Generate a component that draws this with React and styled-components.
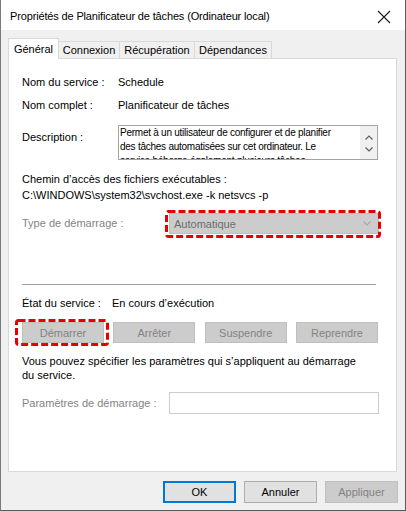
import React from 'react';
import styled, { createGlobalStyle } from 'styled-components';

const GlobalStyle = createGlobalStyle`
    html, body {
        margin: 0;
        padding: 0;
        background: #ffffff;
    }
`;

const colors = {
    face: '#f0f0f0',
    border: '#d9d9d9',
    text: '#000000',
    disabled: '#838383',
    disabledBg: '#cccccc',
    disabledBorder: '#bfbfbf',
    red: '#e60000',
    blue: '#0078d7',
};

const ChevronUp = () => (
    <svg width="8" height="5" viewBox="0 0 8 5">
        <path d="M0.5 4.5 L4 1 L7.5 4.5" fill="none" stroke="#606060" strokeWidth="1.2" />
    </svg>
);

const ChevronDown = ({ color }) => (
    <svg width="8" height="5" viewBox="0 0 8 5">
        <path d="M0.5 0.5 L4 4 L7.5 0.5" fill="none" stroke={color || '#606060'} strokeWidth="1.2" />
    </svg>
);

const DashedFrame = ({ w, h, top, left }) => (
    <FrameSvg width={w} height={h} style={{ top: top, left: left }}>
        <rect
            x="1.5"
            y="1.5"
            width={w - 3}
            height={h - 3}
            rx="2"
            fill="none"
            stroke={colors.red}
            strokeWidth="3"
            strokeDasharray="7 3"
        />
    </FrameSvg>
);

const tabs = [
    { name: 'Général', width: 51 },
    { name: 'Connexion', width: 62 },
    { name: 'Récupération', width: 76 },
    { name: 'Dépendances', width: 78 },
];

const App = () => {
    return (
        <>
            <GlobalStyle />
            <Window>
                <TitleBar>
                    <Title>Propriétés de Planificateur de tâches (Ordinateur local)</Title>
                    <CloseButton>
                        <svg width="14" height="14" viewBox="0 0 14 14">
                            <path d="M1 1 L13 13 M13 1 L1 13" stroke="#1a1a1a" strokeWidth="1.1" />
                        </svg>
                    </CloseButton>
                </TitleBar>
                <Body>
                    <TabStrip>
                        {tabs.map((t, i) => (
                            <Tab key={t.name} selected={i === 0} width={t.width}>
                                {t.name}
                            </Tab>
                        ))}
                    </TabStrip>
                    <Panel>
                        <FieldRow labelWidth={96} top={16}>
                            <Label>Nom du service :</Label>
                            <Value>Schedule</Value>
                        </FieldRow>
                        <FieldRow labelWidth={96} top={8}>
                            <Label>Nom complet :</Label>
                            <Value>Planificateur de tâches</Value>
                        </FieldRow>
                        <FieldRow labelWidth={96} top={12} align="start">
                            <Label style={{ paddingTop: 5 }}>Description :</Label>
                            <DescBox>
                                <DescText>
                                    Permet à un utilisateur de configurer et de planifier
                                    <br />
                                    des tâches automatisées sur cet ordinateur. Le
                                    <br />
                                    service héberge également plusieurs tâches
                                    <br />
                                    critiques du système.
                                </DescText>
                                <ScrollCol>
                                    <ChevronUp />
                                    <ChevronDown />
                                </ScrollCol>
                            </DescBox>
                        </FieldRow>
                        <TextLine top={12}>Chemin d’accès des fichiers exécutables :</TextLine>
                        <TextLine top={1}>{'C:\\WINDOWS\\system32\\svchost.exe -k netsvcs -p'}</TextLine>
                        <FieldRow labelWidth={147} top={10}>
                            <Label disabled>Type de démarrage :</Label>
                            <Annotated>
                                <Combo>
                                    <span>Automatique</span>
                                    <ChevronDown color="#a8a8a8" />
                                </Combo>
                                <DashedFrame w={216} h={28} top={-3} left={-4} />
                            </Annotated>
                        </FieldRow>
                        <Separator />
                        <FieldRow labelWidth={90} top={11}>
                            <Label>État du service :</Label>
                            <Value>En cours d’exécution</Value>
                        </FieldRow>
                        <ButtonRow>
                            <Annotated>
                                <ActionButton>Démarrer</ActionButton>
                                <DashedFrame w={94} h={27} top={-3} left={-7} />
                            </Annotated>
                            <ActionButton>Arrêter</ActionButton>
                            <ActionButton>Suspendre</ActionButton>
                            <ActionButton>Reprendre</ActionButton>
                        </ButtonRow>
                        <Paragraph>
                            Vous pouvez spécifier les paramètres qui s’appliquent au démarrage du service.
                        </Paragraph>
                        <FieldRow labelWidth={147} top={10}>
                            <Label disabled>Paramètres de démarrage :</Label>
                            <ParamInput />
                        </FieldRow>
                    </Panel>
                    <Footer>
                        <DialogButton variant="default">OK</DialogButton>
                        <DialogButton>Annuler</DialogButton>
                        <DialogButton variant="disabled">Appliquer</DialogButton>
                    </Footer>
                </Body>
            </Window>
        </>
    );
};

const Window = styled.div`
    box-sizing: border-box;
    width: 406px;
    height: 511px;
    display: flex;
    flex-direction: column;
    background-color: ${colors.face};
    border-left: 1px solid #7a7a7a;
    border-right: 1px solid #5a5a5a;
    border-bottom: 1px solid #5a5a5a;
    font-family: 'Liberation Sans', Arial, sans-serif;
    font-size: 11px;
    color: ${colors.text};
    overflow: hidden;
`;

const TitleBar = styled.div`
    height: 30px;
    flex: none;
    display: flex;
    align-items: center;
    justify-content: space-between;
    background-color: #ffffff;
    padding-left: 9px;
    padding-right: 14px;
`;

const Title = styled.div`
    font-size: 11px;
    letter-spacing: -0.15px;
    line-height: 16px;
    margin-top: 2px;
    color: #000000;
`;

const CloseButton = styled.div`
    display: flex;
    align-items: center;
    margin-top: 3px;
`;

const Body = styled.div`
    flex: 1;
    display: flex;
    flex-direction: column;
    padding: 0 8px 0 7px;
`;

const TabStrip = styled.div`
    display: flex;
    align-items: flex-end;
    padding-top: 8px;
    height: 20px;
    position: relative;
    z-index: 1;
`;

const Tab = styled.div`
    box-sizing: border-box;
    width: ${(props) => props.width}px;
    height: ${(props) => (props.selected ? 21 : 17)}px;
    margin-bottom: ${(props) => (props.selected ? -1 : 0)}px;
    margin-left: -1px;
    &:first-child {
        margin-left: 0;
    }
    display: flex;
    align-items: center;
    justify-content: center;
    border: 1px solid ${colors.border};
    border-bottom: none;
    background-color: ${(props) => (props.selected ? '#ffffff' : colors.face)};
    position: relative;
    z-index: ${(props) => (props.selected ? 2 : 1)};
    line-height: 15px;
`;

const Panel = styled.div`
    box-sizing: border-box;
    height: 414px;
    flex: none;
    display: flex;
    flex-direction: column;
    background-color: #ffffff;
    border: 1px solid ${colors.border};
    padding: 0 17px 0 13px;
`;

const FieldRow = styled.div`
    display: grid;
    grid-template-columns: ${(props) => props.labelWidth}px 1fr;
    align-items: ${(props) => props.align || 'center'};
    margin-top: ${(props) => props.top}px;
`;

const Label = styled.div`
    line-height: 15px;
    white-space: nowrap;
    color: ${(props) => (props.disabled ? colors.disabled : colors.text)};
`;

const Value = styled.div`
    line-height: 15px;
    white-space: nowrap;
`;

const TextLine = styled.div`
    line-height: 15px;
    margin-top: ${(props) => props.top}px;
    white-space: nowrap;
`;

const DescBox = styled.div`
    box-sizing: border-box;
    width: 260px;
    height: 35px;
    display: flex;
    border: 1px solid #a5a5a5;
    background-color: #ffffff;
    overflow: hidden;
`;

const DescText = styled.div`
    flex: 1;
    padding: 0 0 0 1px;
    font-size: 10px;
    letter-spacing: -0.25px;
    line-height: 14px;
    white-space: nowrap;
    overflow: hidden;
`;

const ScrollCol = styled.div`
    width: 17px;
    flex: none;
    display: flex;
    flex-direction: column;
    align-items: center;
    justify-content: space-between;
    padding: 9px 0 7px;
    background-color: #f0f0f0;
`;

const Annotated = styled.div`
    position: relative;
    display: flex;
`;

const FrameSvg = styled.svg`
    position: absolute;
    pointer-events: none;
    z-index: 3;
`;

const Combo = styled.div`
    box-sizing: border-box;
    width: 210px;
    height: 21px;
    display: flex;
    align-items: center;
    justify-content: space-between;
    padding: 0 7px 0 4px;
    background-color: ${colors.disabledBg};
    border: 1px solid ${colors.disabledBorder};
    color: #6d6d6d;
`;

const Separator = styled.div`
    height: 1px;
    margin: 50px 3px 0 0;
    background-color: #a0a0a0;
`;

const ButtonRow = styled.div`
    display: flex;
    justify-content: space-between;
    margin-top: 11px;
    padding-right: 1px;
`;

const ActionButton = styled.div`
    box-sizing: border-box;
    width: 82px;
    height: 21px;
    display: flex;
    align-items: center;
    justify-content: center;
    background-color: ${colors.disabledBg};
    border: 1px solid ${colors.disabledBorder};
    color: ${colors.disabled};
`;

const Paragraph = styled.div`
    margin-top: 11px;
    line-height: 14px;
    padding-right: 10px;
`;

const ParamInput = styled.div`
    box-sizing: border-box;
    width: 210px;
    height: 22px;
    border: 1px solid #cccccc;
    background-color: #ffffff;
`;

const Footer = styled.div`
    display: flex;
    justify-content: flex-end;
    gap: 8px;
    padding-top: 9px;
    margin-right: -1px;
`;

const DialogButton = styled.div`
    box-sizing: border-box;
    width: 73px;
    height: 22px;
    display: flex;
    align-items: center;
    justify-content: center;
    background-color: ${(props) => (props.variant === 'disabled' ? colors.disabledBg : '#e1e1e1')};
    border: ${(props) =>
        props.variant === 'default'
            ? `2px solid ${colors.blue}`
            : props.variant === 'disabled'
            ? `1px solid ${colors.disabledBorder}`
            : '1px solid #adadad'};
    color: ${(props) => (props.variant === 'disabled' ? colors.disabled : colors.text)};
`;

export default App;
